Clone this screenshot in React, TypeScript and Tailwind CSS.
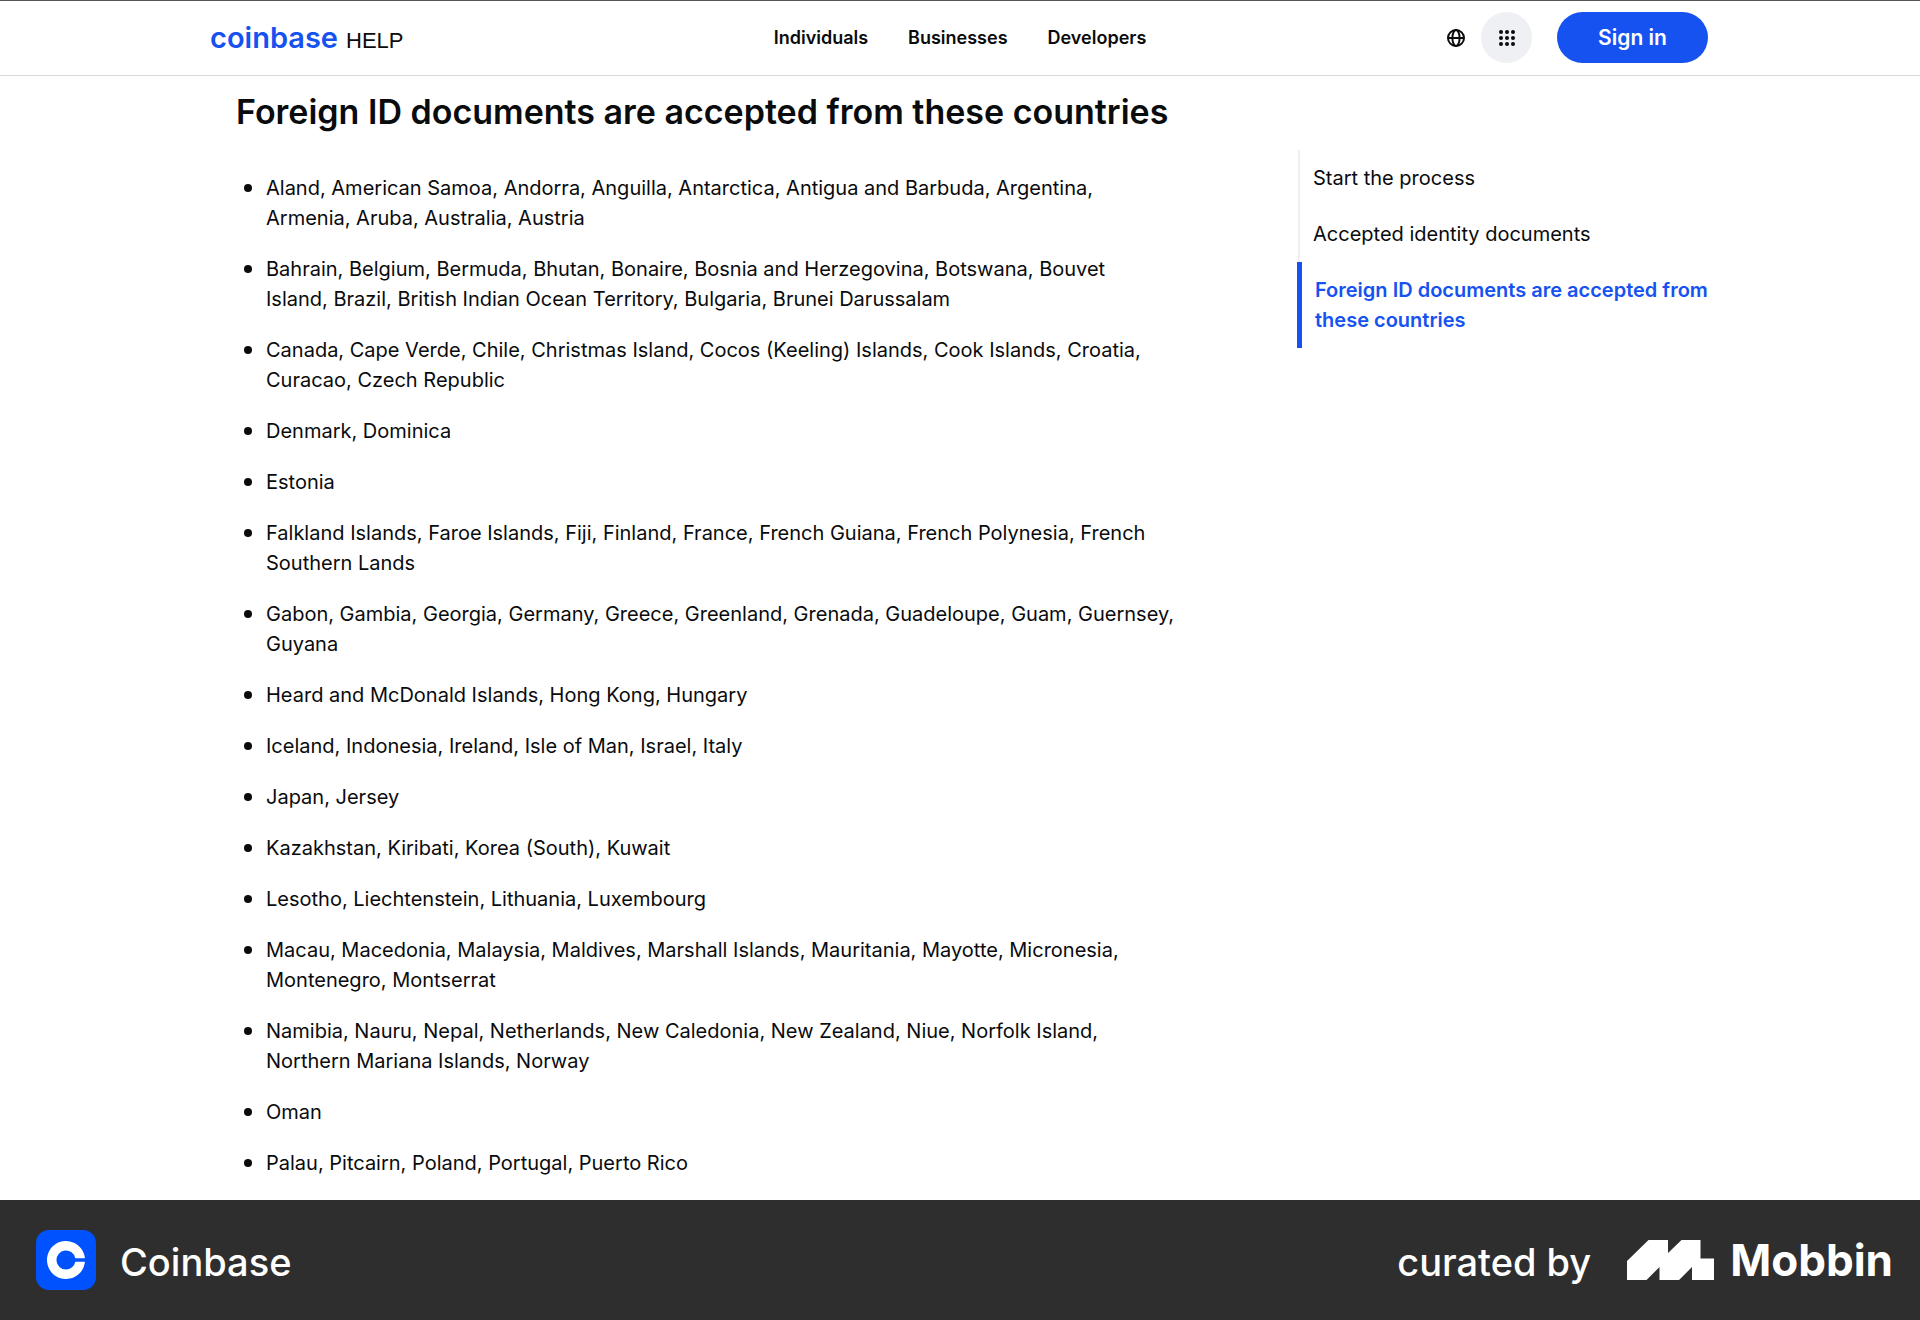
const countries = [
  "Aland, American Samoa, Andorra, Anguilla, Antarctica, Antigua and Barbuda, Argentina, Armenia, Aruba, Australia, Austria",
  "Bahrain, Belgium, Bermuda, Bhutan, Bonaire, Bosnia and Herzegovina, Botswana, Bouvet\nIsland, Brazil, British Indian Ocean Territory, Bulgaria, Brunei Darussalam",
  "Canada, Cape Verde, Chile, Christmas Island, Cocos (Keeling) Islands, Cook Islands, Croatia, Curacao, Czech Republic",
  "Denmark, Dominica",
  "Estonia",
  "Falkland Islands, Faroe Islands, Fiji, Finland, France, French Guiana, French Polynesia, French Southern Lands",
  "Gabon, Gambia, Georgia, Germany, Greece, Greenland, Grenada, Guadeloupe, Guam, Guernsey, Guyana",
  "Heard and McDonald Islands, Hong Kong, Hungary",
  "Iceland, Indonesia, Ireland, Isle of Man, Israel, Italy",
  "Japan, Jersey",
  "Kazakhstan, Kiribati, Korea (South), Kuwait",
  "Lesotho, Liechtenstein, Lithuania, Luxembourg",
  "Macau, Macedonia, Malaysia, Maldives, Marshall Islands, Mauritania, Mayotte, Micronesia, Montenegro, Montserrat",
  "Namibia, Nauru, Nepal, Netherlands, New Caledonia, New Zealand, Niue, Norfolk Island, Northern Mariana Islands, Norway",
  "Oman",
  "Palau, Pitcairn, Poland, Portugal, Puerto Rico",
];

const navLinks = ["Individuals", "Businesses", "Developers"];

function GlobeIcon() {
  return (
    <svg viewBox="0 0 18 18" className="size-[18px]" fill="none" stroke="currentColor" strokeWidth="2" aria-hidden="true">
      <circle cx="9" cy="9" r="8" />
      <ellipse cx="9" cy="9" rx="3.6" ry="8" />
      <path d="M1 9h16" />
    </svg>
  );
}

function GridIcon() {
  const steps = [2, 8, 14];
  return (
    <svg viewBox="0 0 16 16" className="size-4" fill="currentColor" aria-hidden="true">
      {steps.map((y) => steps.map((x) => <circle key={`${x}-${y}`} cx={x} cy={y} r="2" />))}
    </svg>
  );
}

function CoinbaseMark() {
  return (
    <svg viewBox="0 0 60 60" className="size-[60px]" aria-hidden="true">
      <rect width="60" height="60" rx="13" fill="#0052ff" />
      <path
        fill="#fff"
        d="M30 39.5a9.5 9.5 0 1 1 9.3-11.2h9.6a19 19 0 1 0 0 3.4h-9.6A9.5 9.5 0 0 1 30 39.5Z"
      />
    </svg>
  );
}

function MobbinMark() {
  return (
    <svg viewBox="0 0 87 40" className="h-10 w-[87px]" fill="#fff" aria-hidden="true">
      <path d="M0 21 21.500 0H41v13L54.500 0H73.500v18.500H87V40H65V27L52 40H32.500V27L19.500 40H0Z" />
    </svg>
  );
}

export default function App() {
  return (
    <div className="flex min-h-screen flex-col bg-white font-['Inter',sans-serif] text-[#0a0b0d]">
      <header className="border-t border-b border-t-[#555] border-b-[#d8dade]">
        <div className="mx-auto grid h-[74px] max-w-[1500px] grid-cols-[1fr_auto_1fr] items-center pb-px">
          <a href="#home" className="flex items-baseline gap-2">
            <span className="text-[29px] font-semibold text-[#1652f0]">coinbase</span>
            <span className="font-['Liberation_Sans',sans-serif] text-[22px]">HELP</span>
          </a>
          <nav className="flex gap-10 text-lg font-semibold">
            {navLinks.map((label) => (
              <a key={label} href={`#${label.toLowerCase()}`}>{label}</a>
            ))}
          </nav>
          <div className="flex items-center justify-end pr-0.5">
            <button type="button" aria-label="Language" className="p-4">
              <GlobeIcon />
            </button>
            <button type="button" aria-label="Apps" className="mr-[25px] grid size-[51px] place-items-center rounded-full bg-[#eef0f3]">
              <GridIcon />
            </button>
            <button type="button" className="h-[51px] w-[151px] rounded-full bg-[#1652f0] text-[21px] font-semibold text-white">
              Sign in
            </button>
          </div>
        </div>
      </header>

      <div className="mx-auto flex w-full max-w-[1500px] grow justify-between pl-[26px]">
        <main className="w-[944px] pt-4">
          <h1 className="text-[34px] leading-[40px] font-semibold">Foreign ID documents are accepted from these countries</h1>
          <ul className="mt-[41px] flex flex-col gap-[21px] pl-2 text-xl leading-[30px]">
            {countries.map((line) => (
              <li
                key={line}
                className="flex gap-[14px] whitespace-pre-line before:mt-[11px] before:size-2 before:shrink-0 before:rounded-full before:bg-current"
              >
                <span>{line}</span>
              </li>
            ))}
          </ul>
        </main>
        <nav aria-label="On this page" className="-mr-[14px] mt-[74px] w-[427px] text-xl leading-[30px]">
          <a href="#start" className="ml-px block border-l-2 border-[#eef0f3] px-[13px] py-[13px]">Start the process</a>
          <a href="#accepted" className="ml-px block border-l-2 border-[#eef0f3] px-[13px] py-[13px]">Accepted identity documents</a>
          <a href="#foreign" className="block border-l-[5px] border-[#1652f0] py-[13px] pl-[13px] font-semibold text-[#1652f0]">
            Foreign ID documents are accepted from these countries
          </a>
        </nav>
      </div>

      <footer className="flex h-[120px] items-center justify-between bg-[#2e2e2e] pr-[27px] pl-9 text-[38px] font-medium text-white">
        <div className="flex items-center gap-6">
          <CoinbaseMark />
          <span className="pt-1">Coinbase</span>
        </div>
        <div className="flex items-center">
          <span className="mr-9 pt-1">curated by</span>
          <MobbinMark />
          <span className="ml-4 text-[44px] font-bold">Mobbin</span>
        </div>
      </footer>
    </div>
  );
}
